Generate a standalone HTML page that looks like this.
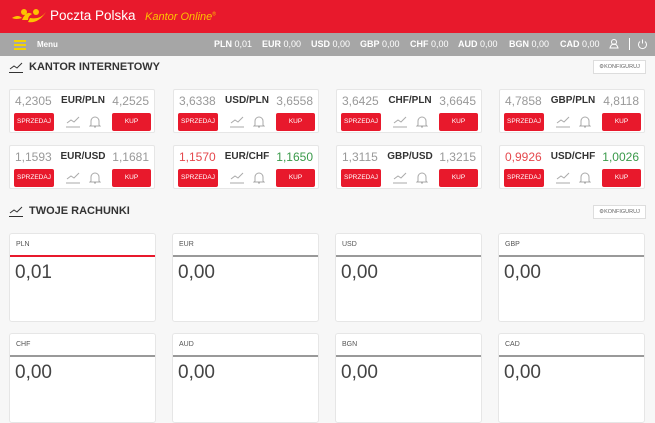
<!DOCTYPE html><html><head><style>
*{margin:0;padding:0;box-sizing:border-box}
body{width:655px;height:409px;overflow:hidden;background:#f7f7f7;font-family:"Liberation Sans",sans-serif;position:relative}
.a{position:absolute}
.hdr{left:0;top:0;width:655px;height:33px;background:#e8192c}
.bar{left:0;top:33px;width:655px;height:23px;background:#a6a6a6;color:#fff;font-size:9px}
.bar span{position:absolute;top:6px;white-space:nowrap}
.bar b{font-weight:bold}
.rc{width:146px;height:44px;background:#fff;border:1px solid #e6e6e6;border-radius:2px}
.rc .n{position:absolute;top:4px;font-size:12px;color:#999}
.rc .p{position:absolute;top:5px;left:0;width:146px;text-align:center;font-size:10px;font-weight:bold;color:#333}
.btn{position:absolute;top:23px;height:18px;background:#e8192c;color:#fff;font-size:6.5px;text-align:center;line-height:18px;border-radius:2px}
.s{left:4px;width:40px}.k{left:102px;width:39px}
.ic{position:absolute;top:25px}
.ac{width:147px;background:#fff;border:1px solid #e6e6e6;border-radius:3px}
.ac .h{height:23px;border-bottom:2px solid #999;font-size:7px;color:#555;padding:7px 0 0 6px}
.ac .v{font-size:19px;color:#444;padding:5px 0 0 5px}
.ttl{font-size:11px;font-weight:bold;color:#333}
.kf{width:53px;height:14px;background:#fff;border:1px solid #ddd;font-size:5.5px;color:#666;text-align:center;line-height:12px}
</style></head><body>
<div class="a hdr">
<svg class="a" style="left:10px;top:6px" width="38" height="20" viewBox="0 0 38 20"><path d="M2 12 Q8 8 12 12 Q6 14 2 12Z" fill="#fdc300"/><circle cx="14" cy="6" r="3" fill="#fdc300"/><path d="M12 14 Q16 4 22 8 Q18 10 18 14Z" fill="#fdc300"/><circle cx="26" cy="6" r="3" fill="#fdc300"/><path d="M18 16 Q28 18 36 6 Q30 14 20 12Z" fill="#fdc300"/></svg>
<div class="a" style="left:50px;top:8px;color:#fff;font-size:13.5px">Poczta Polska</div>
<div class="a" style="left:145px;top:11px;color:#fdc300;font-size:11px;font-style:italic">Kantor Online<sup style="font-size:5px">®</sup></div>
</div>
<div class="a bar">
<div class="a" style="left:14px;top:7px;width:12px;height:2px;background:#f5d300;box-shadow:0 4px 0 #f5d300,0 8px 0 #f5d300"></div>
<div class="a" style="left:37px;top:7px;font-size:8px;font-weight:bold">Menu</div>
<span style="left:214px"><b>PLN</b> 0,01</span>
<span style="left:262px"><b>EUR</b> 0,00</span>
<span style="left:311px"><b>USD</b> 0,00</span>
<span style="left:360px"><b>GBP</b> 0,00</span>
<span style="left:410px"><b>CHF</b> 0,00</span>
<span style="left:458px"><b>AUD</b> 0,00</span>
<span style="left:509px"><b>BGN</b> 0,00</span>
<span style="left:560px"><b>CAD</b> 0,00</span>
<svg class="a" style="left:609px;top:5px" width="10" height="12" viewBox="0 0 10 12" fill="none" stroke="#fff" stroke-width="1"><circle cx="5" cy="4" r="2.5"/><path d="M1 10h8q-1-4-4-4t-4 4z"/></svg>
<div class="a" style="left:629px;top:5px;width:1px;height:12px;background:#fff"></div>
<svg class="a" style="left:637px;top:5px" width="11" height="12" viewBox="0 0 11 12" fill="none" stroke="#fff" stroke-width="1"><path d="M3 3.5a4 4 0 1 0 5 0M5.5 1.5v4"/></svg>
</div>
<svg class="a" style="left:9px;top:62px" width="14" height="11" viewBox="0 0 14 11" fill="none" stroke="#333" stroke-width="1"><path d="M1 7l4-3 3 2 5-5M0 10.5h14"/></svg>
<div class="a ttl" style="left:29px;top:61px">KANTOR INTERNETOWY</div>
<div class="a kf" style="left:593px;top:60px">⚙KONFIGURUJ</div>

<div class="a rc" style="left:9px;top:89px"><span class="n" style="left:5px">4,2305</span><span class="p">EUR/PLN</span><span class="n" style="right:5px">4,2525</span><div class="btn s">SPRZEDAJ</div><span class="ic" style="left:56px"><svg width="14" height="12" viewBox="0 0 14 12" fill="none" stroke="#aaa"><path d="M1 7l4-3 3 2 5-5M0 11h14"/></svg></span><span class="ic" style="left:79px"><svg width="12" height="13" viewBox="0 0 12 13" fill="none" stroke="#aaa"><path d="M2 10V6a4 4 0 0 1 8 0v4l1 1H1zM5 12h2"/></svg></span><div class="btn k">KUP</div></div>
<div class="a rc" style="left:173px;top:89px"><span class="n" style="left:5px">3,6338</span><span class="p">USD/PLN</span><span class="n" style="right:5px">3,6558</span><div class="btn s">SPRZEDAJ</div><span class="ic" style="left:56px"><svg width="14" height="12" viewBox="0 0 14 12" fill="none" stroke="#aaa"><path d="M1 7l4-3 3 2 5-5M0 11h14"/></svg></span><span class="ic" style="left:79px"><svg width="12" height="13" viewBox="0 0 12 13" fill="none" stroke="#aaa"><path d="M2 10V6a4 4 0 0 1 8 0v4l1 1H1zM5 12h2"/></svg></span><div class="btn k">KUP</div></div>
<div class="a rc" style="left:336px;top:89px"><span class="n" style="left:5px">3,6425</span><span class="p">CHF/PLN</span><span class="n" style="right:5px">3,6645</span><div class="btn s">SPRZEDAJ</div><span class="ic" style="left:56px"><svg width="14" height="12" viewBox="0 0 14 12" fill="none" stroke="#aaa"><path d="M1 7l4-3 3 2 5-5M0 11h14"/></svg></span><span class="ic" style="left:79px"><svg width="12" height="13" viewBox="0 0 12 13" fill="none" stroke="#aaa"><path d="M2 10V6a4 4 0 0 1 8 0v4l1 1H1zM5 12h2"/></svg></span><div class="btn k">KUP</div></div>
<div class="a rc" style="left:499px;top:89px"><span class="n" style="left:5px">4,7858</span><span class="p">GBP/PLN</span><span class="n" style="right:5px">4,8118</span><div class="btn s">SPRZEDAJ</div><span class="ic" style="left:56px"><svg width="14" height="12" viewBox="0 0 14 12" fill="none" stroke="#aaa"><path d="M1 7l4-3 3 2 5-5M0 11h14"/></svg></span><span class="ic" style="left:79px"><svg width="12" height="13" viewBox="0 0 12 13" fill="none" stroke="#aaa"><path d="M2 10V6a4 4 0 0 1 8 0v4l1 1H1zM5 12h2"/></svg></span><div class="btn k">KUP</div></div>

<div class="a rc" style="left:9px;top:145px"><span class="n" style="left:5px">1,1593</span><span class="p">EUR/USD</span><span class="n" style="right:5px">1,1681</span><div class="btn s">SPRZEDAJ</div><span class="ic" style="left:56px"><svg width="14" height="12" viewBox="0 0 14 12" fill="none" stroke="#aaa"><path d="M1 7l4-3 3 2 5-5M0 11h14"/></svg></span><span class="ic" style="left:79px"><svg width="12" height="13" viewBox="0 0 12 13" fill="none" stroke="#aaa"><path d="M2 10V6a4 4 0 0 1 8 0v4l1 1H1zM5 12h2"/></svg></span><div class="btn k">KUP</div></div>
<div class="a rc" style="left:173px;top:145px"><span class="n" style="left:5px;color:#e5484d">1,1570</span><span class="p">EUR/CHF</span><span class="n" style="right:5px;color:#3a9a4a">1,1650</span><div class="btn s">SPRZEDAJ</div><span class="ic" style="left:56px"><svg width="14" height="12" viewBox="0 0 14 12" fill="none" stroke="#aaa"><path d="M1 7l4-3 3 2 5-5M0 11h14"/></svg></span><span class="ic" style="left:79px"><svg width="12" height="13" viewBox="0 0 12 13" fill="none" stroke="#aaa"><path d="M2 10V6a4 4 0 0 1 8 0v4l1 1H1zM5 12h2"/></svg></span><div class="btn k">KUP</div></div>
<div class="a rc" style="left:336px;top:145px"><span class="n" style="left:5px">1,3115</span><span class="p">GBP/USD</span><span class="n" style="right:5px">1,3215</span><div class="btn s">SPRZEDAJ</div><span class="ic" style="left:56px"><svg width="14" height="12" viewBox="0 0 14 12" fill="none" stroke="#aaa"><path d="M1 7l4-3 3 2 5-5M0 11h14"/></svg></span><span class="ic" style="left:79px"><svg width="12" height="13" viewBox="0 0 12 13" fill="none" stroke="#aaa"><path d="M2 10V6a4 4 0 0 1 8 0v4l1 1H1zM5 12h2"/></svg></span><div class="btn k">KUP</div></div>
<div class="a rc" style="left:499px;top:145px"><span class="n" style="left:5px;color:#e5484d">0,9926</span><span class="p">USD/CHF</span><span class="n" style="right:5px;color:#3a9a4a">1,0026</span><div class="btn s">SPRZEDAJ</div><span class="ic" style="left:56px"><svg width="14" height="12" viewBox="0 0 14 12" fill="none" stroke="#aaa"><path d="M1 7l4-3 3 2 5-5M0 11h14"/></svg></span><span class="ic" style="left:79px"><svg width="12" height="13" viewBox="0 0 12 13" fill="none" stroke="#aaa"><path d="M2 10V6a4 4 0 0 1 8 0v4l1 1H1zM5 12h2"/></svg></span><div class="btn k">KUP</div></div>

<svg class="a" style="left:9px;top:206px" width="14" height="11" viewBox="0 0 14 11" fill="none" stroke="#333" stroke-width="1"><path d="M1 7l4-3 3 2 5-5M0 10.5h14"/></svg>
<div class="a ttl" style="left:29px;top:205px">TWOJE RACHUNKI</div>
<div class="a kf" style="left:593px;top:205px">⚙KONFIGURUJ</div>

<div class="a ac" style="left:9px;top:233px;height:89px"><div class="h" style="border-color:#e8192c">PLN</div><div class="v">0,01</div></div>
<div class="a ac" style="left:172px;top:233px;height:89px"><div class="h">EUR</div><div class="v">0,00</div></div>
<div class="a ac" style="left:335px;top:233px;height:89px"><div class="h">USD</div><div class="v">0,00</div></div>
<div class="a ac" style="left:498px;top:233px;height:89px"><div class="h">GBP</div><div class="v">0,00</div></div>
<div class="a ac" style="left:9px;top:333px;height:90px"><div class="h">CHF</div><div class="v">0,00</div></div>
<div class="a ac" style="left:172px;top:333px;height:90px"><div class="h">AUD</div><div class="v">0,00</div></div>
<div class="a ac" style="left:335px;top:333px;height:90px"><div class="h">BGN</div><div class="v">0,00</div></div>
<div class="a ac" style="left:498px;top:333px;height:90px"><div class="h">CAD</div><div class="v">0,00</div></div>
</body></html>
